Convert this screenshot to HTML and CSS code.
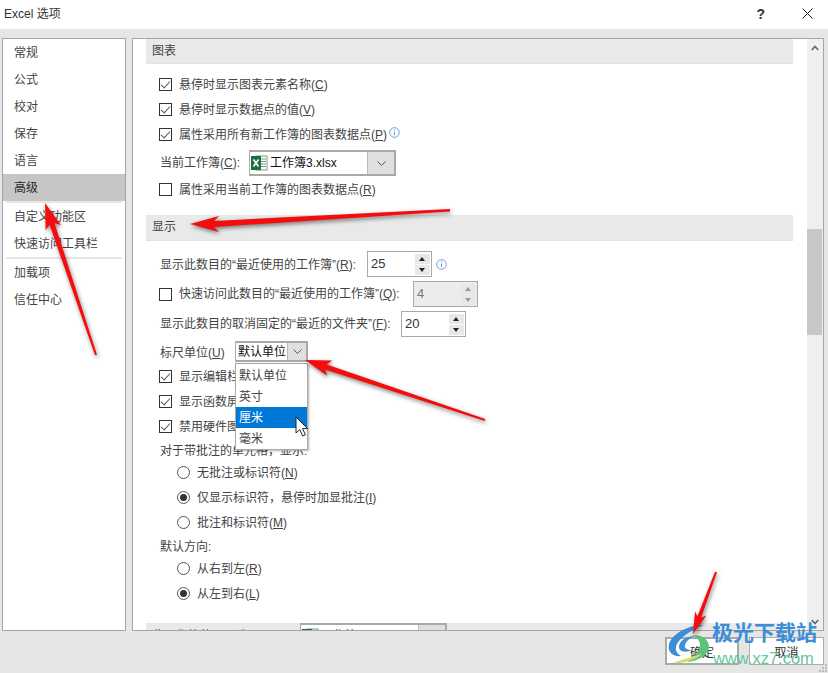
FILE: index.html
```html
<!DOCTYPE html>
<html lang="zh">

<head>
    <meta charset="utf-8">
    <title>Excel 选项</title>
    <link rel="stylesheet" href="styles.css">
</head>

<body>
    <header class="titlebar">
        <span class="title">Excel 选项</span>
        <span class="help">?</span>
        <svg class="close" width="11" height="11" viewBox="0 0 11 11">
            <path d="M0.5 0.5L10.5 10.5M10.5 0.5L0.5 10.5" />
        </svg>
    </header>

    <main class="content">
        <nav class="nav">
            <a class="nav-item">常规</a>
            <a class="nav-item">公式</a>
            <a class="nav-item">校对</a>
            <a class="nav-item">保存</a>
            <a class="nav-item">语言</a>
            <a class="nav-item selected">高级</a>
            <hr class="nav-sep">
            <a class="nav-item">自定义功能区</a>
            <a class="nav-item">快速访问工具栏</a>
            <hr class="nav-sep">
            <a class="nav-item">加载项</a>
            <a class="nav-item">信任中心</a>
        </nav>

        <section class="panel">
            <div class="options">
                <h2 class="section-head first">图表</h2>
                <label class="row"><i class="check on"></i>悬停时显示图表元素名称(<u>C</u>)</label>
                <label class="row"><i class="check on"></i>悬停时显示数据点的值(<u>V</u>)</label>
                <label class="row"><i class="check on"></i>属性采用所有新工作簿的图表数据点(<u>P</u>)
                    <svg class="info sup" width="11" height="11" viewBox="0 0 11 11">
                        <circle cx="5.5" cy="5.5" r="4.8" />
                        <path d="M5.5 4.6V8.4M5.5 2.4V3.5" />
                    </svg>
                </label>
                <div class="row workbook-row">
                    <span class="plain w-book">当前工作簿(<u>C</u>):</span>
                    <div class="combo wide">
                        <svg class="xl" width="17" height="16" viewBox="0 0 17 16">
                            <rect x="5" y="1" width="11" height="14" fill="#fff" stroke="#7a9a85" />
                            <path d="M10 4h5M10 6.5h5M10 9h5M10 11.5h5" stroke="#7a9a85" />
                            <rect x="0" y="1" width="10" height="14" fill="#1d6f42" />
                            <path d="M2.5 4.5L7.5 11.5M7.5 4.5L2.5 11.5" stroke="#fff" stroke-width="1.6" />
                        </svg>
                        <span class="combo-text">工作簿3.xlsx</span>
                        <span class="combo-btn"><svg class="chev" width="9" height="5" viewBox="0 0 9 5"><path d="M0.5 0.5L4.5 4.5L8.5 0.5" /></svg></span>
                    </div>
                </div>
                <label class="row last-chart"><i class="check"></i>属性采用当前工作簿的图表数据点(<u>R</u>)</label>

                <h2 class="section-head">显示</h2>

                <div class="row spin-row top">
                    <span class="plain w-recent">显示此数目的“最近使用的工作簿”(<u>R</u>):</span>
                    <div class="spin"><span>25</span>
                        <div class="spin-btns"><b class="up"></b><b class="down"></b></div>
                    </div>
                    <svg class="info" width="11" height="11" viewBox="0 0 11 11">
                        <circle cx="5.5" cy="5.5" r="4.8" />
                        <path d="M5.5 4.6V8.4M5.5 2.4V3.5" />
                    </svg>
                </div>
                <div class="row spin-row">
                    <i class="check"></i><span class="w-quick">快速访问此数目的“最近使用的工作簿”(<u>Q</u>):</span>
                    <div class="spin disabled"><span>4</span>
                        <div class="spin-btns"><b class="up"></b><b class="down"></b></div>
                    </div>
                </div>
                <div class="row spin-row">
                    <span class="plain w-folder">显示此数目的取消固定的“最近的文件夹”(<u>F</u>):</span>
                    <div class="spin"><span>20</span>
                        <div class="spin-btns"><b class="up"></b><b class="down"></b></div>
                    </div>
                </div>
                <div class="row unit-row">
                    <span class="plain w-unit">标尺单位(<u>U</u>)</span>
                    <div class="combo unit">
                        <span class="combo-text">默认单位</span>
                        <span class="combo-btn"><svg class="chev" width="9" height="5" viewBox="0 0 9 5"><path d="M0.5 0.5L4.5 4.5L8.5 0.5" /></svg></span>
                        <ul class="dropdown">
                            <li>默认单位</li>
                            <li>英寸</li>
                            <li class="active">厘米</li>
                            <li>毫米</li>
                        </ul>
                    </div>
                </div>
                <label class="row"><i class="check on"></i>显示编辑栏(<u>B</u>)</label>
                <label class="row"><i class="check on"></i>显示函数屏幕提示(<u>F</u>)</label>
                <label class="row"><i class="check on"></i>禁用硬件图形加速(<u>G</u>)</label>

                <div class="group-label g1">对于带批注的单元格，显示:</div>
                <label class="row radio-row"><i class="radio"></i>无批注或标识符(<u>N</u>)</label>
                <label class="row radio-row"><i class="radio on"></i>仅显示标识符，悬停时加显批注(<u>I</u>)</label>
                <label class="row radio-row"><i class="radio"></i>批注和标识符(<u>M</u>)</label>

                <div class="group-label g2">默认方向:</div>
                <label class="row radio-row"><i class="radio"></i>从右到左(<u>R</u>)</label>
                <label class="row radio-row"><i class="radio on"></i>从左到右(<u>L</u>)</label>

                <div class="section-head cut">
                    <span class="w-cut">此工作簿的显示选项(<u>B</u>):</span>
                    <div class="combo wide">
                        <svg class="xl" width="17" height="16" viewBox="0 0 17 16">
                            <rect x="5" y="1" width="11" height="14" fill="#fff" stroke="#7a9a85" />
                            <rect x="0" y="1" width="10" height="14" fill="#1d6f42" />
                        </svg>
                        <span class="combo-text">工作簿3.xlsx</span>
                        <span class="combo-btn"></span>
                    </div>
                </div>
            </div>

            <div class="scrollbar">
                <svg class="arrow-btn" width="8" height="6" viewBox="0 0 8 6"><path d="M0.7 5L4 1.5L7.3 5" /></svg>
                <div class="thumb"></div>
                <svg class="arrow-btn bottom" width="8" height="6" viewBox="0 0 8 6"><path d="M0.7 1L4 4.5L7.3 1" /></svg>
            </div>
        </section>
    </main>

    <footer class="footer">
        <button class="btn default">确定</button>
        <button class="btn">取消</button>
    </footer>

    <!-- annotations lying over the dialog -->
    <svg class="arrows" width="828" height="673" viewBox="0 0 828 673">
        <polygon points="45,203 60.9,225.1 54.4,223.1 97,354.7 95,355.3 49.6,224.7 45.7,230.1" />
        <polygon points="190,224 219,216 214,221 450,209 450,211.5 214,227 219,232" />
        <polygon points="305,360 332.2,360.6 326.7,364.6 485.3,419 484.7,421 325.1,369.4 327.2,375.8" />
        <polygon points="693,634 706.3,615.4 701.2,617.8 717,572.3 715,571.7 697.4,616.4 695.1,611.2" />
    </svg>

    <svg class="pointer" width="14" height="21" viewBox="0 0 14 21">
        <path d="M1 1V17L4.8 13.6L7.6 20L10.4 18.8L7.6 12.6H12.6Z" />
    </svg>

    <div class="watermark">
        <svg class="wm-logo" width="44" height="44" viewBox="0 0 44 44">
            <path d="M35 3C20 3 4 12 1 22C-1 30 5 35 13 34C7 31 6 25 11 19C17 12 26 7 35 3Z" fill="#3b8ed8" />
            <path d="M27 14C18 14 11 19 11 25C11 30 18 31 24 28C19 28 16 26 17 23C18 19 22 16 27 14Z" fill="#3b8ed8" />
            <path d="M24 13C34 12 42 18 41 26C40 33 30 39 19 40C27 35 32 29 32 23C32 19 29 15 24 13Z" fill="#5cc47a" />
            <path d="M5 41C15 42 27 38 34 32C27 34 15 37 5 41Z" fill="#d9dc6a" />
        </svg>
        <div class="wm-name">极光下载站</div>
        <div class="wm-url">www.xz7.com</div>
    </div>

    <svg class="grip" width="9" height="9" viewBox="0 0 9 9">
        <path d="M6 0h2v2h-2zM3 3h2v2h-2zM6 3h2v2h-2zM0 6h2v2h-2zM3 6h2v2h-2zM6 6h2v2h-2z" />
    </svg>
</body>

</html>
```

FILE: styles.css
```css
html {
    background-color: #e6e6e6;
}

body {
    position: relative;
    width: 828px;
    height: 673px;
    margin: 0;
    overflow: hidden;
    font-family: "Liberation Sans", "Noto Sans CJK SC", sans-serif;
    font-size: 12px;
    line-height: 14px;
    color: #444;
    background-color: #e6e6e6;
}

u {
    text-underline-offset: 1px;
}

/* title bar */

.titlebar {
    display: flex;
    align-items: center;
    height: 29px;
    padding: 0 15px 2px 4px;
    box-sizing: border-box;
    background-color: #fff;
}

.title {
    flex: 1;
    color: #333;
}

.help {
    margin-right: 37px;
    font-size: 14px;
    font-weight: 700;
    color: #333;
}

.close {
    fill: none;
    stroke: #222;
}

/* layout */

.content {
    display: flex;
    gap: 6px;
    padding: 9px 0 0 2px;
}

.nav {
    display: flex;
    flex-direction: column;
    flex: none;
    width: 124px;
    height: 593px;
    box-sizing: border-box;
    border: 1px solid #a6a6a6;
    background-color: #fff;
}

.nav-item {
    display: flex;
    align-items: center;
    height: 27px;
    padding-left: 11px;
    flex: none;
}

.nav-item.selected {
    color: #262626;
    background-color: #c6c6c6;
}

.nav-sep {
    flex: none;
    height: 2px;
    margin: 0 3px;
    border: 0;
    background-color: #e6e6e6;
}

.panel {
    display: flex;
    flex: none;
    width: 692px;
    height: 593px;
    box-sizing: border-box;
    overflow: hidden;
    border: 1px solid #a6a6a6;
    background-color: #fff;
}

.options {
    flex: none;
    width: 674px;
    padding-left: 13px;
    box-sizing: border-box;
}

/* section heads */

.section-head {
    display: flex;
    align-items: center;
    width: 647px;
    height: 26px;
    margin: 13px 0 10px;
    padding: 0 0 2px 6px;
    box-sizing: border-box;
    font-size: 12px;
    font-weight: 400;
    border-bottom: 1px solid #e1e1e6;
    background-color: #e9e9e9;
}

.section-head.first {
    height: 25px;
    margin: 0 0 8px;
    padding-bottom: 0;
}

.section-head.cut {
    margin: 17px 0 0;
    padding-bottom: 0;
}

.w-cut {
    flex: none;
    width: 148px;
}

/* rows */

.row {
    display: flex;
    align-items: center;
    height: 25px;
    padding-left: 13px;
}

.plain {
    flex: none;
    margin-left: 1px;
}

.w-book {
    width: 89px;
}

.w-recent {
    box-sizing: border-box;
    width: 207px;
    padding-top: 2px;
}

.w-quick {
    flex: none;
    width: 234px;
}

.w-folder {
    width: 241px;
}

.w-unit {
    box-sizing: border-box;
    width: 75px;
    padding-top: 2px;
}

.workbook-row {
    height: 26px;
    margin-top: 3px;
}

.last-chart {
    margin-top: 1px;
}

.check {
    position: relative;
    flex: none;
    width: 13px;
    height: 13px;
    margin-right: 7px;
    box-sizing: border-box;
    border: 1px solid #333;
}

.check.on::after {
    content: "";
    position: absolute;
    top: 0;
    left: 3px;
    width: 4px;
    height: 8px;
    border-right: 1.2px solid #555;
    border-bottom: 1.2px solid #555;
    transform: rotate(42deg);
}

.radio-row {
    padding-left: 31px;
}

.radio {
    position: relative;
    flex: none;
    width: 13px;
    height: 13px;
    margin-right: 7px;
    box-sizing: border-box;
    border: 1px solid #555;
    border-radius: 50%;
}

.radio.on::after {
    content: "";
    position: absolute;
    top: 2px;
    left: 2px;
    width: 7px;
    height: 7px;
    border-radius: 50%;
    background-color: #333;
}

.group-label {
    display: flex;
    align-items: center;
    height: 18px;
    padding-left: 14px;
}

.g1 {
    height: 19px;
    margin-top: 2px;
}

.g2 {
    margin-top: 3px;
}

/* info icon */

.info {
    flex: none;
    margin-left: 4px;
    fill: none;
    stroke: #6f9bd6;
}

.info.sup {
    margin-left: 2px;
    margin-top: -5px;
}

/* combo boxes */

.combo {
    position: relative;
    display: flex;
    align-items: center;
    height: 26px;
    box-sizing: border-box;
    border: 2px solid #a9a9a9;
    border-left-width: 1px;
    background-color: #fff;
}

.combo.wide {
    flex: none;
    width: 147px;
}

.xl {
    flex: none;
    margin-left: 1px;
}

.combo-text {
    flex: 1;
    margin-left: 2px;
    color: #111;
    white-space: nowrap;
}

.combo-btn {
    display: flex;
    align-items: center;
    justify-content: center;
    flex: none;
    align-self: stretch;
    width: 26px;
    border-left: 1px solid #bbb;
    background-color: #e0e0e0;
}

.chev {
    fill: none;
    stroke: #555;
}

.unit-row {
    height: 21px;
    margin: 4px 0 2px;
}

.combo.unit {
    width: 73px;
    height: 21px;
}

.unit .combo-btn {
    width: 18px;
}

.dropdown {
    position: absolute;
    top: 20px;
    left: -1px;
    z-index: 2;
    width: 73px;
    margin: 0;
    padding: 0;
    box-sizing: border-box;
    list-style: none;
    border: 1px solid #a9a9a9;
    background-color: #fff;
    box-shadow: 1px 1px 2px rgba(0, 0, 0, 0.3);
}

.dropdown li {
    display: flex;
    align-items: center;
    height: 21.25px;
    padding: 2px 0 0 3px;
    box-sizing: border-box;
}

.dropdown li.active {
    color: #fff;
    background-color: #0078d7;
}

/* spin boxes */

.spin-row {
    height: 26px;
    margin-top: 4px;
}

.spin-row.top {
    margin-top: 0;
}

.spin {
    display: flex;
    align-items: center;
    flex: none;
    width: 65px;
    height: 26px;
    padding-left: 3px;
    box-sizing: border-box;
    border: 1px solid #a9a9a9;
    color: #333;
    font-size: 13px;
}

.spin span {
    flex: 1;
}

.spin.disabled {
    color: #777;
    background-color: #ececec;
}

.spin-btns {
    display: flex;
    flex-direction: column;
    gap: 1px;
    flex: none;
    width: 15px;
    margin-right: 1px;
}

.spin-btns b {
    position: relative;
    display: block;
    height: 10px;
    background-color: #e8e8e8;
}

.spin-btns b::after {
    content: "";
    position: absolute;
    top: 3px;
    left: 4px;
    width: 0;
    height: 0;
    border-left: 3.5px solid transparent;
    border-right: 3.5px solid transparent;
}

.spin-btns .up::after {
    border-bottom: 4px solid #222;
}

.spin-btns .down::after {
    border-top: 4px solid #222;
}

.disabled .spin-btns .up::after {
    border-bottom-color: #999;
}

.disabled .spin-btns .down::after {
    border-top-color: #999;
}

/* scrollbar */

.scrollbar {
    position: relative;
    flex: none;
    width: 16px;
    margin-left: auto;
    background-color: #efefef;
}

.thumb {
    width: 15px;
    height: 106px;
    margin-top: 190px;
    background-color: #c8c8c8;
}

.arrow-btn {
    position: absolute;
    top: 6px;
    left: 4px;
    fill: none;
    stroke: #666;
    stroke-width: 1.6;
}

.arrow-btn.bottom {
    top: auto;
    bottom: 5px;
}

/* footer */

.footer {
    display: flex;
    justify-content: flex-end;
    gap: 10px;
    padding: 6px 4px 0 0;
}

.btn {
    width: 75px;
    height: 28px;
    padding: 0;
    font-family: inherit;
    font-size: 12px;
    color: #333;
    border: 1px solid #adadad;
    background-color: #fff;
}

.btn.default {
    width: 74px;
    border: 2px solid #a9a9a9;
}

/* overlays */

.arrows {
    position: absolute;
    top: 0;
    left: 0;
    z-index: 4;
    pointer-events: none;
    fill: #f50d0d;
    filter: drop-shadow(1px 2px 2px rgba(0, 0, 0, 0.5));
}

.pointer {
    position: absolute;
    top: 416px;
    left: 295px;
    z-index: 3;
    fill: #fff;
    stroke: #222;
}

.watermark {
    position: absolute;
    top: 622px;
    left: 668px;
    z-index: 3;
    width: 160px;
    height: 51px;
    pointer-events: none;
}

.wm-logo {
    position: absolute;
    top: 0;
    left: 0;
}

.wm-name {
    position: absolute;
    top: -1px;
    left: 44px;
    font-size: 21px;
    line-height: 24px;
    font-weight: 700;
    white-space: nowrap;
    color: #3b8ed8;
}

.wm-url {
    position: absolute;
    top: 27px;
    left: 45px;
    font-size: 16.5px;
    line-height: 18px;
    white-space: nowrap;
    color: #66c79a;
}

.grip {
    position: absolute;
    right: 0;
    bottom: 0;
    fill: #bbb;
}
```
